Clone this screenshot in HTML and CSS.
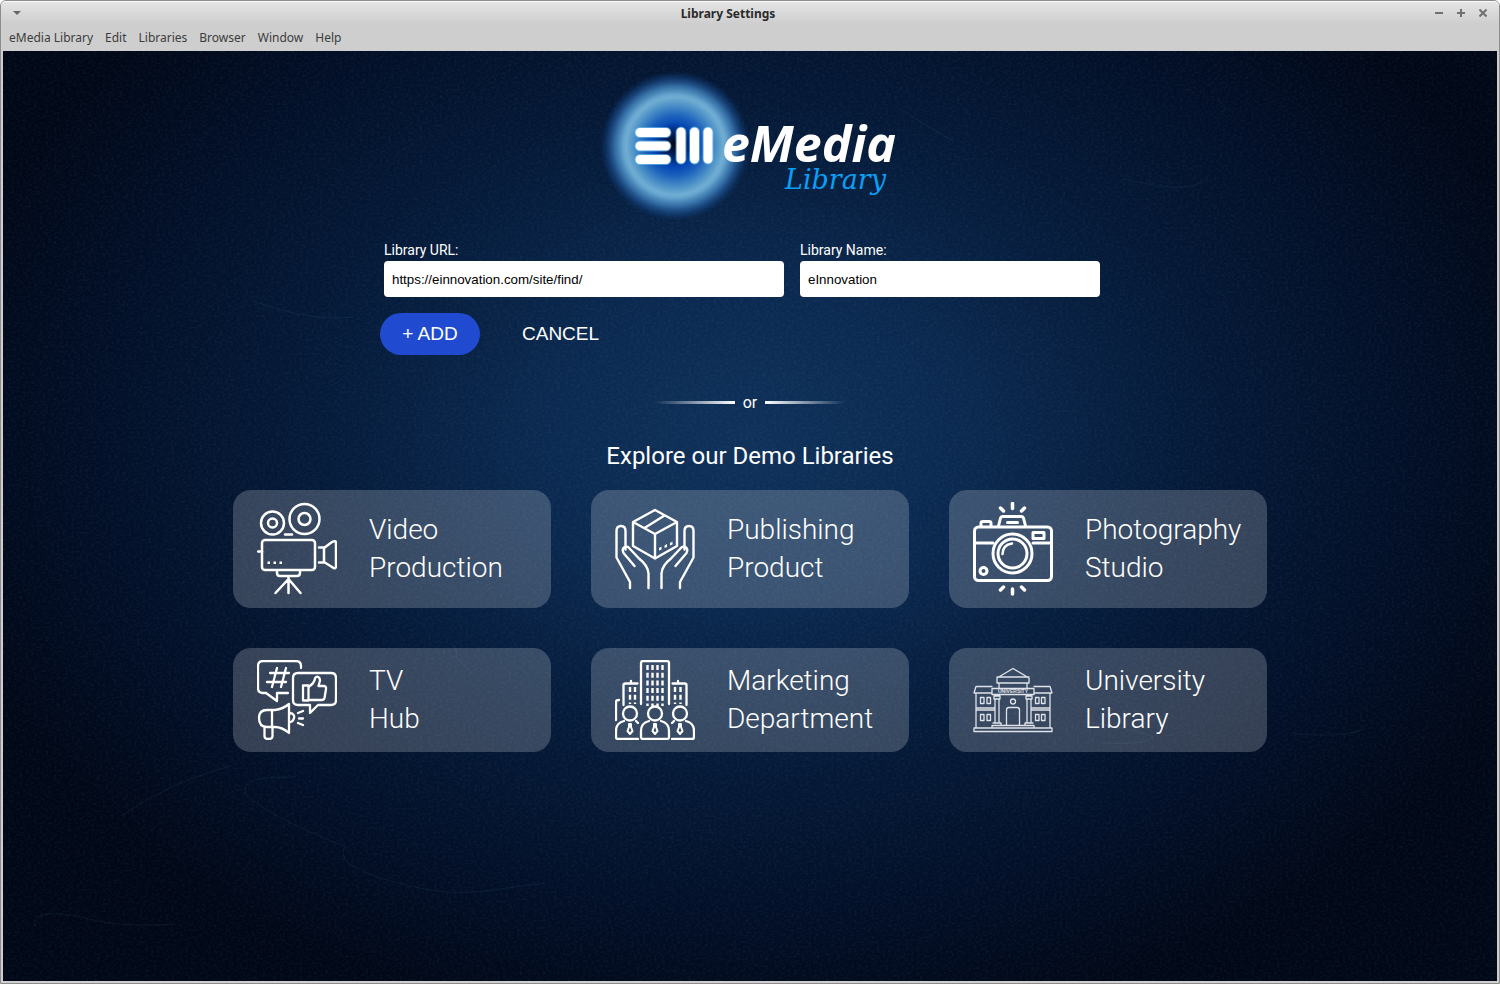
FILE: index.html
```html
<!DOCTYPE html>
<html lang="en">
<head>
<meta charset="utf-8">
<title>Library Settings</title>
<link rel="stylesheet" href="styles.css">
</head>
<body>
<div class="window">
  <header class="titlebar">
    <button class="winbtn" aria-label="Window menu"><svg width="10" height="6" viewBox="0 0 10 6"><path d="M1 1h8L5 5z" fill="#666"/></svg></button>
    <h1 class="title">Library Settings</h1>
    <div class="winbtns">
      <button class="winbtn" aria-label="Minimize"><svg width="10" height="10" viewBox="0 0 10 10"><path d="M1 5h8" class="ctl"/></svg></button>
      <button class="winbtn" aria-label="Maximize"><svg width="10" height="10" viewBox="0 0 10 10"><path d="M1 5h8M5 1v8" class="ctl"/></svg></button>
      <button class="winbtn" aria-label="Close"><svg width="10" height="10" viewBox="0 0 10 10"><path d="M1.500 1.500l7 7M8.500 1.500l-7 7" class="ctl"/></svg></button>
    </div>
  </header>
  <nav class="menubar">
    <button>eMedia Library</button><button>Edit</button><button>Libraries</button><button>Browser</button><button>Window</button><button>Help</button>
  </nav>
  <main class="content">
    <svg class="texture" aria-hidden="true">
      <filter id="grain" x="0" y="0" width="100%" height="100%">
        <feTurbulence type="fractalNoise" baseFrequency="0.35 0.42" numOctaves="3" seed="4"/>
        <feColorMatrix values="0 0 0 0 .3  0 0 0 0 .6  0 0 0 0 .7  .9 0 0 0 -.36"/>
      </filter>
      <rect width="100%" height="100%" filter="url(#grain)" opacity=".15"/>
      <g class="scratches">
        <path d="M342 796c-12 20 40 34 80 42s70 0 120-6M243 744c-4-16 10-18 50-18M243 744q20 20 100 52M32 875c-6-12 20-16 50-8s60 8 90 6M118 765c30-20 60-36 110-50M445 594c5-4 10 2 8 12l16 16M1215 50c10 4 8 12 2 10M1290 682c30 4 60 2 70-4M900 60l50 30M1120 128c30 6 60 14 80 2M250 250c30 10 60 20 100 16M1080 670q60 10 70 16-4 8-50 6"/>
      </g>
    </svg>
    <div class="page">
      <svg class="logo" width="300" height="150" viewBox="600 70 300 150" role="img" aria-label="eMedia Library">
        <defs>
          <radialGradient id="glow">
            <stop offset="0" stop-color="#00143c"/><stop offset=".1" stop-color="#002a78"/><stop offset=".28" stop-color="#0446b4"/><stop offset=".4" stop-color="#1c62bc"/><stop offset=".56" stop-color="#5094c8"/><stop offset=".65" stop-color="#70add2"/><stop offset=".69" stop-color="#66a5cf"/><stop offset=".8" stop-color="#3b7bb6" stop-opacity=".85"/><stop offset=".9" stop-color="#1d559a" stop-opacity=".5"/><stop offset="1" stop-color="#0c3a78" stop-opacity="0"/>
          </radialGradient>
          <radialGradient id="core"><stop offset="0" stop-color="#000818"/><stop offset="1" stop-color="#001850" stop-opacity="0"/></radialGradient>
        </defs>
        <circle cx="675" cy="146" r="75" fill="url(#glow)"/>
        <ellipse cx="674" cy="144" rx="20" ry="22" fill="url(#core)"/>
        <path d="M640 132.500h26M640 146h26M640 159.500h26M681 132v27M694.500 132v27M708 132v27" stroke="#75c6ee" stroke-opacity=".6" stroke-width="11" stroke-linecap="round"/>
        <path d="M640 132.500h26M640 146h26M640 159.500h26M681 132v27M694.500 132v27M708 132v27" stroke="#fff" stroke-width="9" stroke-linecap="round"/>
        <text x="722" y="162" class="logo-main">eMedia</text>
        <text x="785" y="189" class="logo-sub">Library</text>
      </svg>
      <form class="form">
        <div class="fields">
          <div class="field url"><label for="url">Library URL:</label><input id="url" type="text" value="https://einnovation.com/site/find/"></div>
          <div class="field name"><label for="name">Library Name:</label><input id="name" type="text" value="eInnovation"></div>
        </div>
        <div class="actions"><button type="button" class="btn add">+ ADD</button><button type="button" class="btn">CANCEL</button></div>
      </form>
      <div class="or"><span class="line left"></span><span>or</span><span class="line right"></span></div>
      <h2 class="heading">Explore our Demo Libraries</h2>
      <div class="cards">
        <a class="card" href="#video">
          <svg class="icon" width="80" height="94" viewBox="257 502 80 94">
            <g stroke-width="2.500"><circle cx="272.500" cy="523" r="11.500"/><circle cx="272.500" cy="523" r="4.500"/><circle cx="304.500" cy="519" r="15"/><circle cx="304.500" cy="519" r="6"/><rect x="262" y="540" width="53" height="30" rx="3"/><path d="M285 534.500h7M258 551.500h4M319 547.500h5v15h-5M324 548l8-6q4-2 4 1v23q0 4-4 1l-8-5M277 571v2q0 3 3 3h17q3 0 3-3v-2M288.500 577v16M288.500 579l-13 14M288.500 579l12 14"/></g>
            <path class="solid" d="M267.500 561.500h2.500v2.500h-2.500zM273.500 561.500h2.500v2.500h-2.500zM279.500 561.500h2.500v2.500h-2.500z"/>
          </svg><span>Video<br>Production</span></a>
        <a class="card" href="#publishing">
          <svg class="icon" width="80" height="94" viewBox="615 502 80 94">
            <g stroke-width="2.400"><path d="M655 510l22 12v24l-22 12.500-22-12.500v-24zM633 522l22 12 22-12M655 534v24M644.500 528l20-12.500"/>
            <path d="M630 588v-6l-13.500-24.500V531q0-5 4.500-5t4.500 5v18.500M634.500 566l-11-13q-2-4 1-6 3-1.500 6 2.500l8.500 9q9 7 9.500 15V588"/>
            <path d="M680 588v-6l13.500-24.500V531q0-5-4.500-5t-4.500 5v18.500M675.500 566l11-13q2-4-1-6-3-1.500-6 2.500l-8.500 9q-9 7-9.500 15V588"/></g>
            <path class="solid" d="M659 548l2.500-1.500v3l-2.500 1zM664.500 545.500l2.500-1.500v3l-2.500 1zM670 543l2.500-1.500v3l-2.500 1z"/>
          </svg><span>Publishing<br>Product</span></a>
        <a class="card" href="#photography">
          <svg class="icon" width="80" height="94" viewBox="973 502 80 94">
            <g stroke-width="3"><rect x="974.500" y="527" width="77" height="53.500" rx="4"/><path d="M975 543h18M1033 543h18M981 526v-3q0-1.500 2-1.500h6q2 0 2 1.500v3M998.500 526l2-8q.5-1.500 2-1.500h19q1.500 0 2 1.500l2 8M1007.500 522.500h10"/><circle cx="1012.500" cy="553.500" r="19.500"/><circle cx="1012.500" cy="553.500" r="14.500"/><path d="M1002.500 554q0-9 9.500-10.500" stroke-width="2.500"/><rect x="1033" y="532.500" width="11" height="6"/><circle cx="983.500" cy="571" r="3.500"/></g>
            <path stroke-width="3.500" d="M1012.500 503.500v5M1000.500 508l3 3M1024.500 508l-3 3M1012.500 589v5M1003.500 587l-3 3M1021.500 587l3 3"/>
          </svg><span>Photography<br>Studio</span></a>
        <a class="card" href="#tv">
          <svg class="icon" width="80" height="80" viewBox="257 660 80 80">
            <g stroke-width="2.300"><path d="M301 668v-2q0-5-5-5h-33q-5 0-5 5v22q0 5 5 5h3l11 8v-8h11M298 673h33q5 0 5 5v22q0 5-5 5h-13l-8 8v-8h-12q-5 0-5-5v-22q0-5 5-5zM277 668l-5 19M286 668l-5 19M270 673h19M267 682h19"/><path d="M303 685.500h5.500v15H303zM308.500 687q6-4 6.500-8.500c1-3 5-2 5 2l-1.500 5.500h5q3 0 2.500 3l-1.500 9q-.5 2-3 2h-13"/>
            <path d="M289 704v29q-7-6-14-6h-8q-8 0-8-9 0-8 8-8h8q8-1 14-6zM272 710v17M264.500 727v9q0 3 4 3t4-3v-9M290 713q5 1 4 5t-4 4M298 713l5-2M299 718.500h4M298 723l5 2"/></g>
          </svg><span>TV<br>Hub</span></a>
        <a class="card" href="#marketing">
          <svg class="icon" width="80" height="80" viewBox="615 660 80 80">
            <g stroke-width="2.300"><path d="M641 704v-41q0-2 2-2h24q2 0 2 2v41M623.500 705v-20q0-1.500 2-1.500h12M686.500 705v-20q0-1.500-2-1.500h-12M631 683v-2M678 683v-2M616 720v-18q0-2 3-2"/>
            <circle cx="630" cy="713.500" r="7"/><circle cx="655" cy="713.500" r="7"/><circle cx="680" cy="713.500" r="7"/>
            <path d="M624 721q-8 2-8 10v6q0 2 2 2h20M649 721q-8 2-8 10v6q0 2 2 2h24q2 0 2-2v-6q0-8-8-10M686 721q8 2 8 10v6q0 2-2 2h-20M636 721l2 2M674 721l-2 2"/></g>
            <path stroke-width="2" d="M629 724h2v3l1.500 4-2.500 3-2.500-3 1.500-4zM654 724h2v3l1.500 4-2.500 3-2.500-3 1.500-4zM679 724h2v3l1.500 4-2.500 3-2.500-3 1.500-4z"/>
            <path stroke-width="2.400" stroke-linecap="butt" stroke-dasharray="5 2.700" d="M647.500 665v41M652.500 665v41M657.500 665v41M662.500 665v41M630 687v17M635 687v17M675 687v17M680.500 687v17"/>
          </svg><span>Marketing<br>Department</span></a>
        <a class="card" href="#university">
          <svg class="icon dim" width="80" height="80" viewBox="973 660 80 80">
            <g stroke-width="1.300"><path d="M997 683v-5l16-9.500 16 9.500v5zM997 677h32M999 683v5M1027 683v5M992 688.500h42v6h-42zM992 686.500h-16l-2 6.500h18M1034 686.500h16l2 6.500h-18M976 693v35M1050 693v35M976 708h18M976 710h18M1032 708h18M1032 710h18M974 728h78v3.500h-78zM992 728v-2.500h42v2.500M994 696h6v3h-6zM1026 696h6v3h-6zM995 699v24M999 699v24M1027 699v24M1031 699v24M993 723h8v2.500M1033 723h-8v2.500M1006.500 725v-15q0-2.500 2.500-2.500h8q2.500 0 2.500 2.500v15"/><circle cx="1013" cy="701.500" r="2.500"/><path d="M980.500 697.500h3.500v6h-3.500zM987 697.500h3.500v6h-3.500zM980.500 714.500h3.500v6h-3.500zM987 714.500h3.500v6h-3.500zM1035.500 697.500h3.500v6h-3.500zM1041.500 697.500h3.500v6h-3.500zM1035.500 714.500h3.500v6h-3.500zM1041.500 714.500h3.500v6h-3.500z"/></g>
            <text x="1013" y="693" text-anchor="middle" class="sign">UNIVERSITY</text>
          </svg><span>University<br>Library</span></a>
      </div>
    </div>
  </main>
</div>
</body>
</html>
```
FILE: styles.css
```css
* { box-sizing: border-box; }
body { margin: 0; background: #fff; font-family: Roboto, "Liberation Sans", sans-serif; color: #fff; }
button { font: inherit; color: inherit; background: none; border: 0; padding: 0; }
.window { display: flex; flex-direction: column; min-height: 100vh; padding: 1px 2px 2px; background: #cecece; border: 1px solid #8c8c8c; border-radius: 6px 6px 0 0; }
.titlebar { display: flex; align-items: center; justify-content: space-between; height: 23px; margin: -1px -2px 0; padding: 0 8px; border-top: 1px solid #fafafa; border-radius: 5px 5px 0 0; background: linear-gradient(#e4e4e4, #cecece); }
.title { margin: 0; font: bold 12px/20px "Noto Sans", sans-serif; color: #2a2a2a; padding-top: 2px; }
.titlebar > .winbtn { width: 22px; text-align: left; padding-left: 3px; }
.winbtns { display: flex; gap: 12px; width: 66px; justify-content: flex-end; padding-right: 3px; }
.winbtn { display: block; line-height: 0; }
.ctl { stroke: #707070; stroke-width: 2; fill: none; }
.menubar { display: flex; gap: 12px; height: 27px; padding: 0 6px; font: 12px/28px "Noto Sans", sans-serif; color: #3c3c3c; }
.content { position: relative; flex: 1; background: radial-gradient(ellipse 56% 65% at 50% 42%, #0f315a 0%, #0b2950 25%, #051a39 52%, #020e26 80%, #010716 100%); }
.texture { position: absolute; inset: 0; width: 100%; height: 100%; }
.scratches { fill: none; stroke: #3c84a0; stroke-opacity: .13; }
.page { position: relative; display: flex; flex-direction: column; align-items: center; padding: 19px 24px 40px; }
.logo { display: block; }
.logo-main { font: italic bold 50px "Open Sans", "Noto Sans", sans-serif; fill: #fff; }
.logo-sub { font: italic 27px "DejaVu Serif", serif; fill: #0a9ff5; }
.form { width: 100%; max-width: 740px; padding: 20px 20px 0 4px; }
.fields { display: flex; gap: 16px; }
.field { display: flex; flex-direction: column; gap: 1px; }
.field label { font-size: 14px; line-height: 20px; }
.field.url { flex: 0 1 400px; }
.field.name { flex: 0 1 300px; }
.field input { width: 100%; height: 36px; padding: 0 8px; border: 0; border-radius: 4px; background: #fff; color: #000; font-family: "Liberation Sans", Arial, sans-serif; }
.actions { display: flex; gap: 20px; margin: 16px 0 0 -4px; }
.btn { height: 42px; padding: 0 22px; border-radius: 21px; font: 19px "Liberation Sans", Arial, sans-serif; }
.add { min-width: 100px; background: #204bd0; }
.or { display: flex; align-items: center; gap: 8px; margin-top: 37px; font-size: 16px; line-height: 21px; }
.line { width: 80px; height: 3px; }
.left { background: linear-gradient(to left, #fff, transparent); }
.right { background: linear-gradient(to right, #fff, transparent); }
.heading { margin: 29px 0 20px; font-size: 24px; font-weight: 400; line-height: 28px; }
.cards { display: grid; grid-template-columns: repeat(3, 1fr); gap: 40px; width: 100%; max-width: 1034px; }
.card { display: flex; align-items: center; gap: 32px; padding: 12px 24px; border-radius: 18px; background: rgba(255, 255, 255, .2); color: #fff; text-decoration: none; font-size: 28px; font-weight: 300; line-height: 38px; }
.icon { flex: none; fill: none; stroke: #fff; stroke-linecap: round; stroke-linejoin: round; }
.solid { fill: #fff; stroke: none; }
.dim { stroke: #e0e4ea; }
.sign { font: bold 5px "Liberation Sans", sans-serif; fill: #e0e4ea; stroke: none; }
```
